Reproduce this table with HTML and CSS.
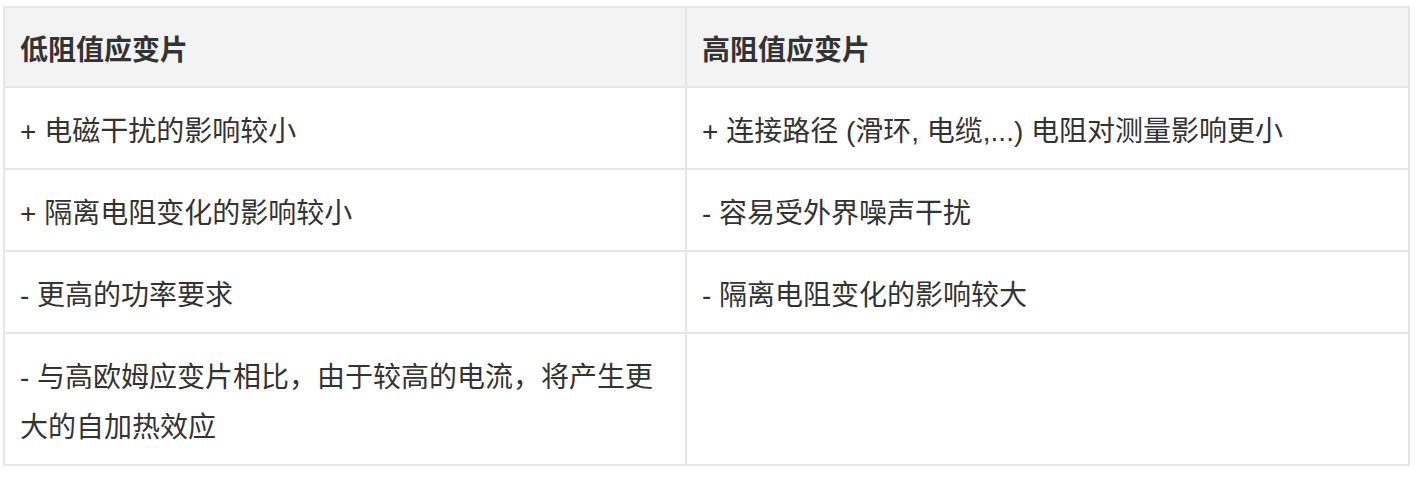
FILE: index.html
```html
<!DOCTYPE html>
<html lang="zh-CN">
<head>
<meta charset="utf-8">
<title>应变片对比</title>
<link rel="stylesheet" href="styles.css">
</head>
<body>
<div class="page">
  <table class="compare">
    <thead>
      <tr>
        <th class="col-left">低阻值应变片</th>
        <th>高阻值应变片</th>
      </tr>
    </thead>
    <tbody>
      <tr>
        <td class="col-left">+ 电磁干扰的影响较小</td>
        <td>+ 连接路径 (滑环, 电缆,...) 电阻对测量影响更小</td>
      </tr>
      <tr>
        <td class="col-left">+ 隔离电阻变化的影响较小</td>
        <td>- 容易受外界噪声干扰</td>
      </tr>
      <tr>
        <td class="col-left">- 更高的功率要求</td>
        <td>- 隔离电阻变化的影响较大</td>
      </tr>
      <tr>
        <td class="col-left">- 与高欧姆应变片相比，由于较高的电流，将产生更大的自加热效应</td>
        <td></td>
      </tr>
    </tbody>
  </table>
</div>
</body>
</html>
```

FILE: styles.css
```css
html, body {
  margin: 0;
  padding: 0;
  background: #ffffff;
}

.page {
  padding: 6px 10px 0 3px;
}

.compare {
  width: 1407px;
  border-collapse: separate;
  border-spacing: 0;
  border-top: 2px solid #e6e6e6;
  border-left: 2px solid #e6e6e6;
  table-layout: fixed;
  font-family: "Liberation Sans", "Noto Sans CJK SC", sans-serif;
  font-size: 28px;
  line-height: 50px;
  color: #333333;
}

.compare th,
.compare td {
  border-right: 2px solid #e6e6e6;
  border-bottom: 2px solid #e6e6e6;
  padding: 19px 15px 11px;
  text-align: left;
  vertical-align: middle;
}

.compare th {
  background: #f3f3f3;
  font-weight: bold;
  padding-top: 18px;
  padding-bottom: 10px;
}

.compare .col-left {
  width: 650px;
}
```
